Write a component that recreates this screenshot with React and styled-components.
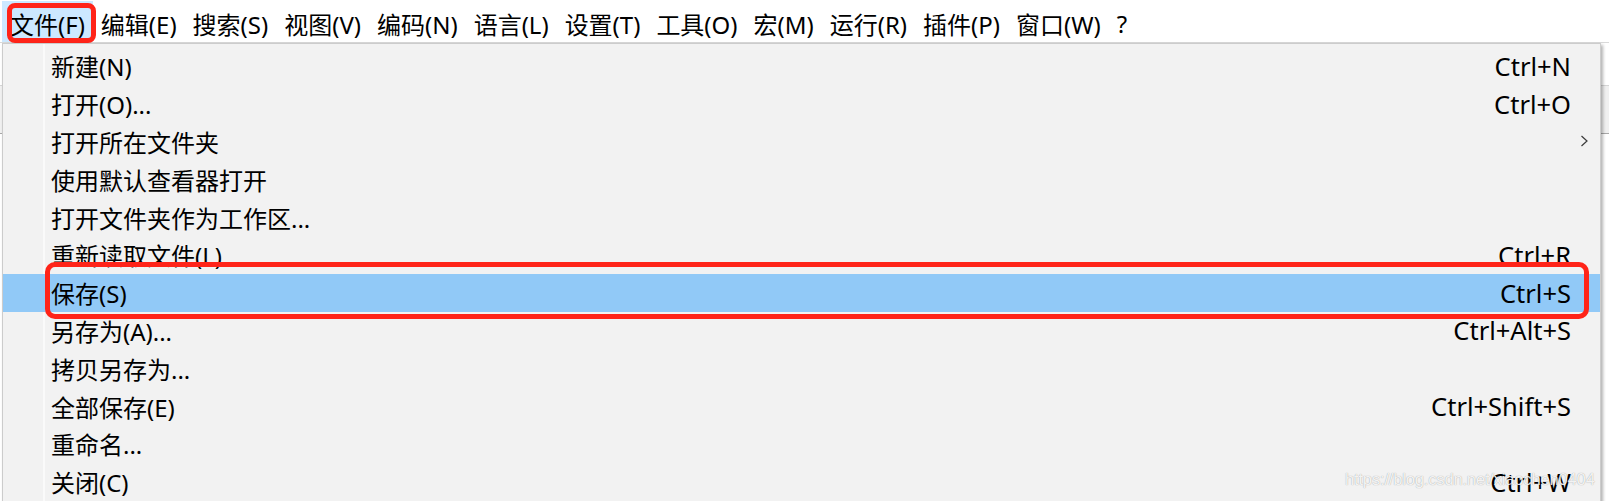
import React from 'react';
import styled, { createGlobalStyle } from 'styled-components';

const GlobalStyle = createGlobalStyle`
  html, body {
    margin: 0;
    background: #fff;
    overflow: hidden;
  }
  body {
    font-family: "Noto Sans", "Noto Sans CJK SC", sans-serif;
    color: #000;
  }
`;

const menus = [
  '文件(F)', '编辑(E)', '搜索(S)', '视图(V)', '编码(N)', '语言(L)', '设置(T)',
  '工具(O)', '宏(M)', '运行(R)', '插件(P)', '窗口(W)', '?',
];

const fileItems = [
  { label: '新建(N)', keys: 'Ctrl+N' },
  { label: '打开(O)...', keys: 'Ctrl+O' },
  { label: '打开所在文件夹', sub: true },
  { label: '使用默认查看器打开' },
  { label: '打开文件夹作为工作区...' },
  { label: '重新读取文件(L)', keys: 'Ctrl+R' },
  { label: '保存(S)', keys: 'Ctrl+S', selected: true },
  { label: '另存为(A)...', keys: 'Ctrl+Alt+S' },
  { label: '拷贝另存为...' },
  { label: '全部保存(E)', keys: 'Ctrl+Shift+S' },
  { label: '重命名...' },
  { label: '关闭(C)', keys: 'Ctrl+W' },
];

const Window = styled.div`
  position: relative;
  height: 501px;
  overflow: hidden;
`;

const MenuBar = styled.div`
  display: flex;
  height: 43px;
  box-sizing: border-box;
  padding-left: 2px;
  border-bottom: 1px solid #d9d9d9;
  background: #fff;
`;

const MenuTitle = styled.div`
  position: relative;
  display: flex;
  align-items: center;
  margin-top: 1px;
  padding: 3px 8px 0;
  font-size: 24px;
  white-space: nowrap;
  background: ${({ active }) => (active ? '#cce8ff' : 'transparent')};

  &::after {
    content: '';
    display: ${({ marked }) => (marked ? 'block' : 'none')};
    position: absolute;
    left: 5px;
    right: -3px;
    top: 2px;
    bottom: -1px;
    border: 5px solid #ff2419;
    border-radius: 8px;
  }
`;

const Toolbar = styled.div`
  height: 42px;
  background: #fff;
  border-bottom: 1px solid #d5d5d5;
`;

const TabStrip = styled.div`
  height: 47px;
  background: #f0f0f0;
  border-bottom: 1px solid #a8a8a8;
`;

const Dropdown = styled.div`
  position: absolute;
  top: 43px;
  left: 2px;
  width: 1599px;
  box-sizing: border-box;
  padding: 3px 0;
  background: #f2f2f2;
  border: 1px solid #cccccc;
  box-shadow: 2px 2px 3px rgba(0, 0, 0, 0.3);
  z-index: 1;

  &::before {
    content: '';
    position: absolute;
    top: 0;
    bottom: 0;
    left: 40px;
    width: 2px;
    background: #fafafa;
  }
`;

const Row = styled.div`
  position: relative;
  display: grid;
  grid-template-columns: 1fr auto 29px;
  align-items: center;
  height: 37.8px;
  padding-left: 48px;
  background: ${({ selected }) => (selected ? '#91c9f7' : 'transparent')};

  &::after {
    content: '';
    display: ${({ selected }) => (selected ? 'block' : 'none')};
    position: absolute;
    left: 42px;
    right: 11px;
    top: -12px;
    bottom: -7px;
    border: 5px solid #ff2419;
    border-radius: 10px;
    z-index: 2;
  }
`;

const Label = styled.span`
  font-size: 24px;
  white-space: nowrap;
`;

const Keys = styled.span`
  font-size: 25.5px;
  white-space: nowrap;
`;

const SubArrow = styled.span`
  display: flex;
  padding-left: 9px;
`;

const Watermark = styled.div`
  position: absolute;
  left: 1345px;
  top: 470px;
  font-family: "Liberation Sans", Arial, sans-serif;
  font-size: 16.6px;
  letter-spacing: -0.2px;
  color: rgba(255, 255, 255, 0.9);
  text-shadow: 0 0 1px rgba(0, 0, 0, 0.4);
  white-space: nowrap;
  z-index: 3;
`;

const Chevron = () => (
  <svg width="9" height="12" viewBox="0 0 9 12">
    <polyline points="1.5,1 7,6 1.5,11" fill="none" stroke="#3a3a3a" strokeWidth="1.2" />
  </svg>
);

const App = () => (
  <Window>
    <GlobalStyle />
    <MenuBar>
      {menus.map((m, i) => (
        <MenuTitle key={m} active={i === 0} marked={i === 0}>
          {m}
        </MenuTitle>
      ))}
    </MenuBar>
    <Toolbar />
    <TabStrip />
    <Dropdown>
      {fileItems.map((it) => (
        <Row key={it.label} selected={it.selected}>
          <Label>{it.label}</Label>
          <Keys>{it.keys}</Keys>
          <SubArrow>{it.sub && <Chevron />}</SubArrow>
        </Row>
      ))}
    </Dropdown>
    <Watermark>https://blog.csdn.net/xiaochen0404</Watermark>
  </Window>
);

export default App;
